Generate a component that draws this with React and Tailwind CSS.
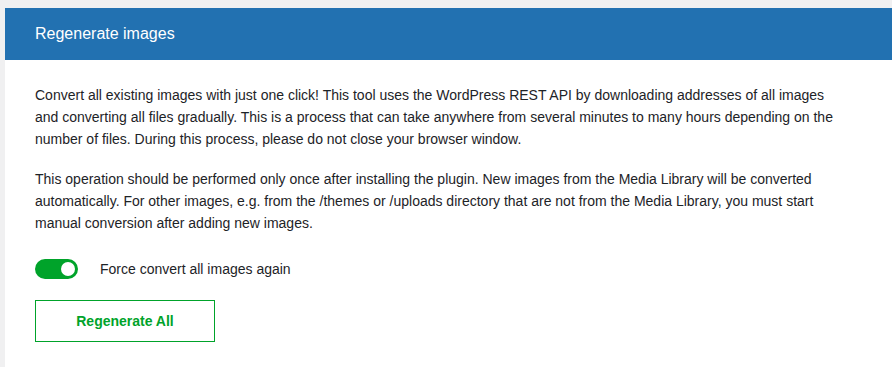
export default function App() {
  return (
    <div className="min-h-[367px] bg-[#f0f0f1] pl-[5px] pt-[8px] font-['Liberation_Sans',sans-serif]">
      <div className="bg-white min-h-[359px]">
        <div className="h-[52px] bg-[#2271b1] flex items-center px-[30px]">
          <h2 className="text-white text-[16px] leading-none">Regenerate images</h2>
        </div>
        <div className="px-[30px] pt-[24px] text-[14px] leading-[22px] text-[#1d2327]">
          <p>
            Convert all existing images with just one click! This tool uses the WordPress REST API by downloading addresses of all images<br />
            and converting all files gradually. This is a process that can take anywhere from several minutes to many hours depending on the<br />
            number of files. During this process, please do not close your browser window.
          </p>
          <p className="mt-[18px]">
            This operation should be performed only once after installing the plugin. New images from the Media Library will be converted<br />
            automatically. For other images, e.g. from the /themes or /uploads directory that are not from the Media Library, you must start<br />
            manual conversion after adding new images.
          </p>
          <div className="mt-[24px] flex items-center gap-[22px]">
            <div className="relative w-[43px] h-[20px] rounded-full bg-[#00a32a]">
              <div className="absolute right-[3px] top-[3px] w-[14px] h-[14px] rounded-full bg-white"></div>
            </div>
            <span>Force convert all images again</span>
          </div>
          <button className="mt-[20px] w-[180px] h-[42px] border border-[#00a32a] text-[#00a32a] font-semibold text-[14px] bg-white">
            Regenerate All
          </button>
        </div>
      </div>
    </div>
  );
}
